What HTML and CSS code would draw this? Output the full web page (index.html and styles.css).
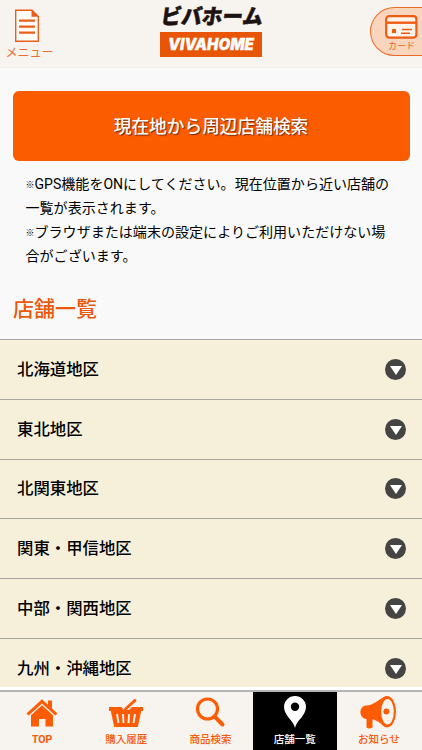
FILE: index.html
```html
<!DOCTYPE html>
<html lang="ja">

<head>
  <meta charset="UTF-8">
  <meta name="viewport" content="width=device-width, initial-scale=1.0">
  <title>店舗一覧</title>
  <link rel="stylesheet" href="styles.css">
</head>

<body>
  <header class="header">
    <a class="menu">
      <svg width="26" height="34" viewBox="0 0 26 34">
        <path d="M1.7 1.2H18L24.3 7.5V32.3H1.7Z" fill="#fffdf9" stroke="#e95e1a" stroke-width="1.4" />
        <path d="M17.5 1V7.8H24.5Z" fill="#e95e1a" />
        <path d="M5 11.7H21M5 17.7H21M5 23.7H21" stroke="#e95e1a" stroke-width="2.2" />
      </svg>
      <span>メニュー</span>
    </a>
    <div class="logo">
      <svg width="102" height="22" viewBox="0 0 102 22">
        <text class="logo-kana" x="2.5" y="18.2" textLength="102" lengthAdjust="spacingAndGlyphs" transform="skewX(-8)">ビバホーム</text>
      </svg>
      <svg class="logo-box" width="102" height="25" viewBox="0 0 102 25">
        <text class="logo-name" x="8" y="17.8" textLength="86" lengthAdjust="spacingAndGlyphs">VIVAHOME</text>
      </svg>
    </div>
    <a class="card">
      <svg width="33" height="24" viewBox="0 0 33 24">
        <rect x="1.2" y="1.2" width="30.2" height="21.4" rx="3" fill="#fff4ea" stroke="#ee5c14" stroke-width="2.2" />
        <path d="M1 7.7H32" stroke="#ee5c14" stroke-width="2.4" />
        <rect x="7" y="14" width="4" height="4" fill="#ee5c14" />
        <path d="M17 14.5H27M16 18.2H25" stroke="#ee5c14" stroke-width="1.4" />
      </svg>
      <span>カード</span>
    </a>
  </header>

  <main class="main">
    <a class="gps-btn">現在地から周辺店舗検索</a>
    <p class="note"><span class="mark">※</span>GPS機能をONにしてください。現在位置から近い店舗の<br>一覧が表示されます。<br><span class="mark">※</span>ブラウザまたは端末の設定によりご利用いただけない場<br>合がございます。</p>
    <h1 class="title">店舗一覧</h1>
    <ul class="area-list">
      <li>北海道地区<span class="arrow"></span></li>
      <li>東北地区<span class="arrow"></span></li>
      <li>北関東地区<span class="arrow"></span></li>
      <li>関東・甲信地区<span class="arrow"></span></li>
      <li>中部・関西地区<span class="arrow"></span></li>
      <li>九州・沖縄地区<span class="arrow"></span></li>
    </ul>
  </main>

  <nav class="footer-nav">
    <a>
      <svg width="32" height="34" viewBox="0 0 32 34" fill="#fd5c04">
        <path d="M16 6.2L22 11.7V7.5H26V15.4L31.5 20.5L29.4 22.6L16 10.4L2.6 22.6L.5 20.5Z" />
        <path d="M16 12.2L27 22.2V33.5H19.5V26H13V33.5H5V22.2Z" />
      </svg>
      <span class="top">TOP</span>
    </a>
    <a>
      <svg width="36" height="34" viewBox="0 0 36 34">
        <path d="M1 14H13.5L16 17H21L24 14H35V18H33.2L29.8 34H6.2L2.8 18H1Z" fill="#fd5c04" />
        <path d="M17.5 16L27 7.4" stroke="#fd5c04" stroke-width="2.8" stroke-linecap="round" />
        <path d="M9 21L10.5 30M15 21L15.5 30M21 21L20.5 30M27 21L25.5 30" stroke="#f7f3ef" stroke-width="1.9" />
      </svg>
      <span>購入履歴</span>
    </a>
    <a>
      <svg width="30" height="34" viewBox="0 0 30 34" fill="none" stroke="#fd5c04">
        <circle cx="12.5" cy="16" r="10" stroke-width="3.2" />
        <path d="M19.5 23.3L27.5 31.5" stroke-width="4" stroke-linecap="round" />
      </svg>
      <span>商品検索</span>
    </a>
    <a class="active">
      <svg width="24" height="34" viewBox="0 0 24 34">
        <path fill-rule="evenodd" d="M12 35C10.5 27.5 1 22.5 1 14A11 11 0 0 1 23 14C23 22.5 13.5 27.5 12 35ZM12 9.6A4.2 4.2 0 1 0 12 18A4.2 4.2 0 1 0 12 9.6Z" fill="#fff" />
      </svg>
      <span>店舗一覧</span>
    </a>
    <a>
      <svg width="37" height="34" viewBox="0 0 37 34">
        <path d="M6 12.5C14 12.5 18 6 26 3.5V34C20 30 16 27 12.5 26.3V34.5Q9 36.5 6.5 34.5V26C-1.5 25-1.5 13.5 6 12.5Z" fill="#fd5c04" />
        <ellipse cx="27" cy="18.7" rx="9" ry="15.8" fill="#fd5c04" />
        <ellipse cx="27.5" cy="18.7" rx="6.3" ry="12.8" fill="#f9f3ed" />
        <circle cx="26.4" cy="18.6" r="3" fill="#fd5c04" />
      </svg>
      <span>お知らせ</span>
    </a>
  </nav>
</body>

</html>
```
FILE: styles.css
```css
* {
  box-sizing: border-box;
}

body {
  margin: 0;
  height: 750px;
  overflow: hidden;
  display: flex;
  flex-direction: column;
  background-color: #f9f9f9;
  color: #000;
  font-family: Roboto, "Noto Sans CJK JP", sans-serif;
}

svg {
  display: block;
  flex-shrink: 0;
  overflow: visible;
}

.header {
  height: 68px;
  flex-shrink: 0;
  display: grid;
  grid-template-columns: 160px 102px 1fr;
  background-color: #f7f3ee;
  border-bottom: 1px solid #f1ede7;
}

.menu {
  width: 54px;
  padding: 9px 0 0;
  display: flex;
  flex-direction: column;
  align-items: center;
  color: #ed6b30;
  font-size: 12px;
  line-height: 20px;
  white-space: nowrap;
}

.menu span {
  padding-left: 5px;
}

.logo {
  padding-top: 6px;
}

.logo-kana {
  font-family: "Noto Sans CJK JP", sans-serif;
  font-size: 21px;
  font-weight: 900;
  fill: #1c1210;
  stroke: #1c1210;
  stroke-width: .5px;
}

.logo-box {
  margin-top: 4px;
  background-color: #e95506;
}

.logo-name {
  font-family: Inter, sans-serif;
  font-size: 15.5px;
  font-weight: 900;
  font-style: italic;
  fill: #fff;
  stroke: #fff;
  stroke-width: .3px;
}

.card {
  width: 52px;
  height: 49px;
  margin-top: 7px;
  padding: 7px 0 0 14px;
  justify-self: end;
  background-color: #f9d5bd;
  border: 1.5px solid #ec6a29;
  border-right: 0;
  border-radius: 25px 0 0 25px;
  color: #ec6320;
  font-size: 9px;
  line-height: 15px;
}

.card span {
  display: block;
  padding-left: 3px;
}

.main {
  height: 619px;
  flex-shrink: 0;
  overflow: hidden;
}

.gps-btn {
  height: 70px;
  margin: 23px 12px 0 13px;
  padding: 0 1px 3px 0;
  display: flex;
  align-items: center;
  justify-content: center;
  background-color: #fb5c00;
  border-radius: 6px;
  color: #fff;
  font-size: 17.7px;
  font-weight: 500;
  text-shadow: 1px 1px 1px rgba(60, 20, 0, .7);
}

.note {
  margin: 11px 0 0 25.5px;
  font-size: 14.05px;
  line-height: 24px;
  white-space: nowrap;
}

.mark {
  font-size: 9px;
  font-weight: 900;
  line-height: 1;
  vertical-align: 1px;
}

.title {
  margin: 24px 0 0 13px;
  height: 35px;
  color: #e9590c;
  font-size: 21px;
  font-weight: 500;
  line-height: 34px;
}

.area-list {
  margin: 12px 0 0;
  padding: 0;
  list-style: none;
}

.area-list li {
  height: 59.8px;
  padding: 0 16px 3px 17px;
  display: flex;
  align-items: center;
  justify-content: space-between;
  background-color: #f6f0db;
  border-top: 1px solid #a6a5a0;
  font-size: 16.4px;
  font-weight: 500;
}

.arrow {
  width: 21px;
  height: 21px;
  margin-top: 3px;
  display: flex;
  align-items: center;
  justify-content: center;
  background-color: #444;
  border-radius: 50%;
}

.arrow::before {
  content: "";
  margin-top: 2px;
  border: 6px solid transparent;
  border-top: 9px solid #fff;
  border-bottom: 0;
}

.footer-nav {
  height: 63px;
  flex-shrink: 0;
  padding-top: 3px;
  display: grid;
  grid-template-columns: repeat(4, 84.2px) 1fr;
  background-color: #fff;
}

.footer-nav a {
  padding-top: 1px;
  display: flex;
  flex-direction: column;
  align-items: center;
  background-color: #f7f3ef;
  border-top: 2px solid #b5b5b6;
  color: #f85b0b;
  font-size: 10.5px;
  font-weight: 500;
  line-height: 16px;
}

.footer-nav a:last-child {
  padding-right: 1px;
}

.footer-nav span {
  margin-top: 5px;
}

.footer-nav .top {
  font-weight: 700;
}

.footer-nav .active {
  background-color: #000;
  color: #fff;
}
```
